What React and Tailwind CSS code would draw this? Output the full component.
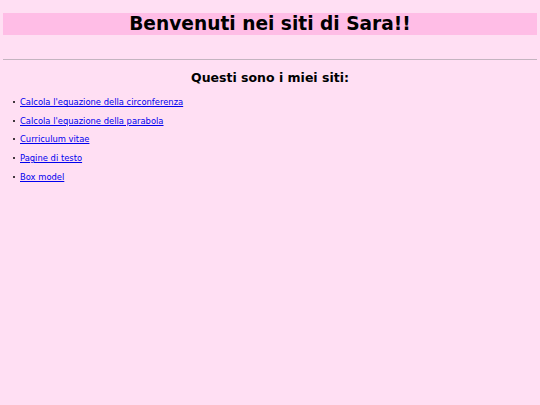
export default function App() {
  const links = [
    "Calcola l'equazione della circonferenza",
    "Calcola l'equazione della parabola",
    "Curriculum vitae",
    "Pagine di testo",
    "Box model",
  ];
  return (
    <div className="min-h-[405px] bg-[#ffdff3] px-[3px] pt-[13px]" style={{ fontFamily: '"DejaVu Sans", Verdana, sans-serif' }}>
      <h1 className="h-[22px] bg-[#ffbde6] text-center text-[18.6px] font-bold leading-[22px] text-black">
        Benvenuti nei siti di Sara!!
      </h1>
      <hr className="mt-[24px] border-t border-[#c4b4c0]" />
      <h2 className="mt-[10px] text-center text-[12.5px] font-bold leading-[16px] text-black">
        Questi sono i miei siti:
      </h2>
      <ul className="mt-[7px] flex flex-col">
        {links.map((l) => (
          <li key={l} className="flex h-[18.6px] items-center">
            <span className="ml-[10px] mr-[5px] h-[2px] w-[2px] rounded-full bg-black" />
            <a href="#" className="text-[8.4px] leading-[10px] text-[#0000ee] underline">
              {l}
            </a>
          </li>
        ))}
      </ul>
    </div>
  );
}
